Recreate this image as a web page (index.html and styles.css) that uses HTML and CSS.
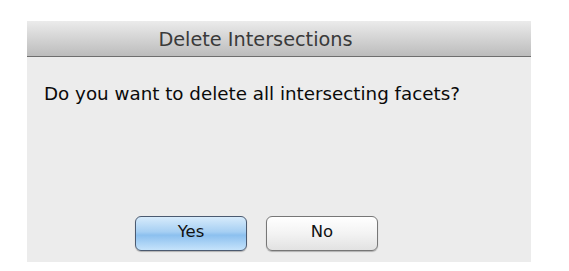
FILE: index.html
```html
<!DOCTYPE html>
<html>
<head>
<meta charset="utf-8">
<link rel="stylesheet" href="styles.css">
</head>
<body>
<div class="dialog">
  <div class="titlebar">Delete Intersections</div>
  <div class="content">
    <p class="message">Do you want to delete all intersecting facets?</p>
    <div class="buttons">
      <button class="btn btn-default">Yes</button>
      <button class="btn">No</button>
    </div>
  </div>
</div>
</body>
</html>
```
FILE: styles.css
```css
html, body {
  margin: 0;
  padding: 0;
  background: #ffffff;
}
body {
  padding: 21px 0 0 27px;
  font-family: "DejaVu Sans", "Liberation Sans", sans-serif;
}
.dialog {
  width: 504px;
  height: 241px;
  background: #ececec;
  display: flex;
  flex-direction: column;
  box-sizing: border-box;
}
.titlebar {
  height: 36px;
  box-sizing: border-box;
  background: linear-gradient(#ebebeb, #bcbcbc);
  border-bottom: 1px solid #6e6e6e;
  display: flex;
  align-items: center;
  justify-content: center;
  font-size: 19.3px;
  color: #3a3a3a;
  padding: 1px 47px 0 0;
}
.content {
  flex: 1;
  display: flex;
  flex-direction: column;
  padding: 0 0 0 17px;
}
.message {
  margin: 26px 0 0 0;
  font-size: 18.3px;
  line-height: 22px;
  color: #0a0a0a;
}
.buttons {
  margin-top: auto;
  margin-bottom: 11px;
  margin-left: 91px;
  display: flex;
  gap: 19px;
}
.btn {
  width: 112px;
  height: 35px;
  border-radius: 6px;
  border: 1px solid #777;
  background: linear-gradient(#ffffff, #f3f3f3 50%, #e2e2e2);
  font-family: "DejaVu Sans", "Liberation Sans", sans-serif;
  font-size: 16.5px;
  color: #111;
  padding: 0 0 4px 0;
  box-shadow: 0 1px 1px rgba(0,0,0,0.25);
}
.btn-default {
  border-color: #4b5a70;
  background: linear-gradient(#d7ebfb, #a6cff3 45%, #8cc0ef 55%, #c5e3fb);
}
```
